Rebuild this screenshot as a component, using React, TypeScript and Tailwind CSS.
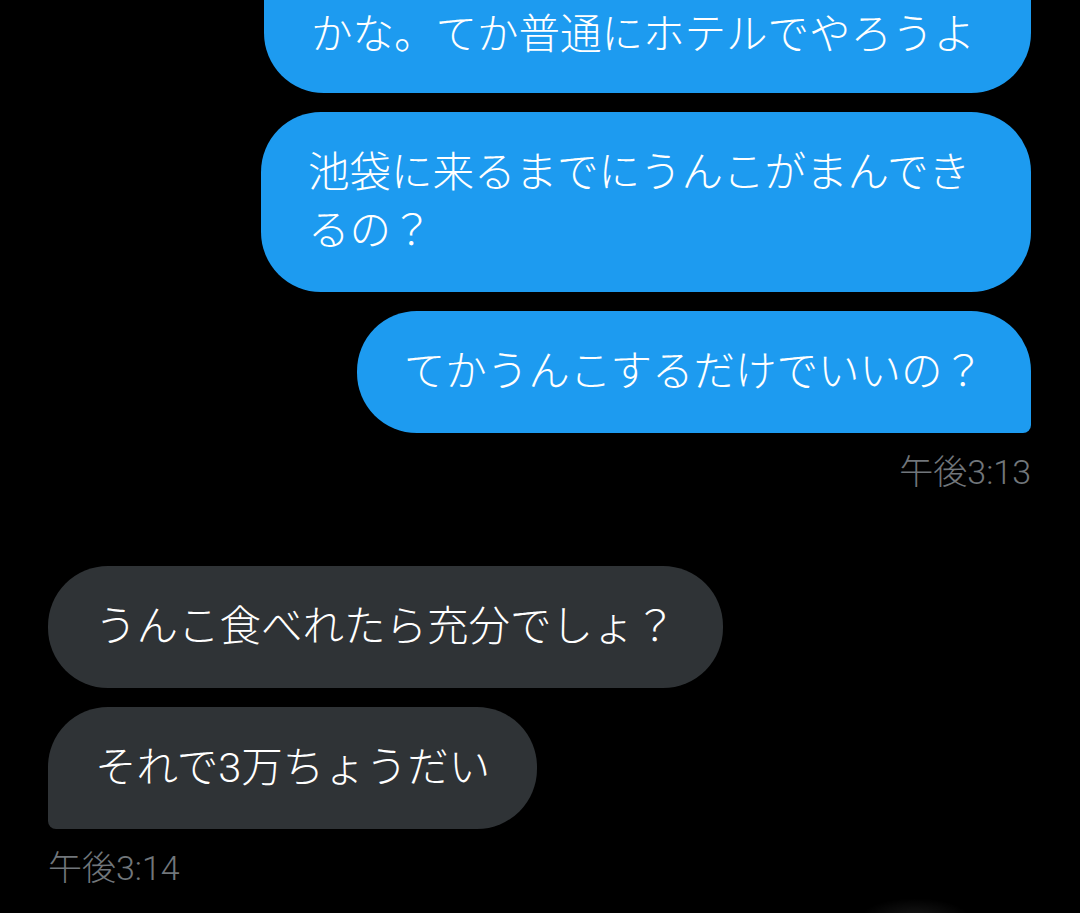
import React from "react"

type Msg = {
  text: string
  mine: boolean
  corner: string
}

const sent: Msg[] = [
  { text: "かな。てか普通にホテルでやろうよ", mine: true, corner: "w-[767px] rounded-t-none rounded-b-[60px] pt-[6px] pb-[29px]" },
  { text: "池袋に来るまでにうんこがまんできるの？", mine: true, corner: "rounded-[60px] py-[32px]" },
  { text: "てかうんこするだけでいいの？", mine: true, corner: "rounded-[60px] rounded-br-[8px] py-[32px]" },
]

const received: Msg[] = [
  { text: "うんこ食べれたら充分でしょ？", mine: false, corner: "rounded-[60px] py-[32px]" },
  { text: "それで3万ちょうだい", mine: false, corner: "rounded-[60px] rounded-bl-[8px] py-[32px]" },
]

function Bubble({ msg }: { msg: Msg }) {
  return (
    <div
      className={`max-w-[770px] px-[47px] text-[41.5px] font-light leading-[58px] text-white ${msg.corner} ${
        msg.mine ? "self-end bg-[#1d9bf0]" : "self-start bg-[#2f3336]"
      }`}
    >
      {msg.text}
    </div>
  )
}

export default function App() {
  return (
    <div
      className="relative w-full h-[913px] overflow-hidden bg-black"
      style={{ fontFamily: 'Roboto, "Noto Sans CJK JP", sans-serif' }}
    >
      <div className="flex flex-col pl-[48px] pr-[49px]">
        <div className="flex flex-col gap-[19px]">
          {sent.map((m, i) => (
            <Bubble key={i} msg={m} />
          ))}
        </div>
        <div className="self-end mt-[19px] text-[34px] font-light leading-[40px] text-[#71767b]">午後3:13</div>

        <div className="mt-[74px] flex flex-col gap-[19px]">
          {received.map((m, i) => (
            <Bubble key={i} msg={m} />
          ))}
        </div>
        <div className="self-start mt-[19px] text-[34px] font-light leading-[40px] text-[#71767b]">午後3:14</div>
      </div>

      <div className="absolute left-[860px] top-[898px] w-[110px] h-[40px] rounded-full bg-[radial-gradient(ellipse_at_center,rgba(255,255,255,0.09),transparent_70%)]" />
    </div>
  )
}
